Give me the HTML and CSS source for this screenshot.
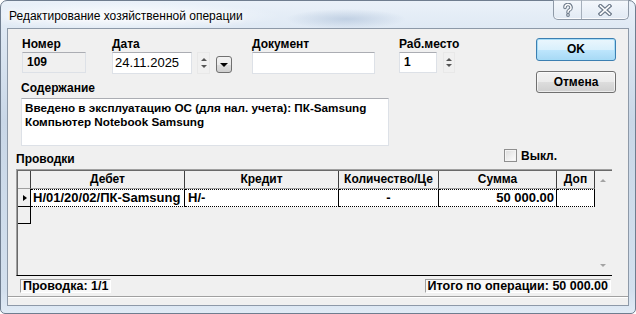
FILE: index.html
```html
<!DOCTYPE html>
<html lang="ru">

<head>
    <meta charset="UTF-8">
    <meta name="viewport" content="width=device-width, initial-scale=1.0">
    <title>Редактирование хозяйственной операции</title>
    <link rel="stylesheet" href="styles.css">
</head>

<body>
    <div class="window">
        <div class="titlebar">
            <div class="title">Редактирование хозяйственной операции</div>
            <div class="caption-buttons">
                <a class="cap-btn cap-help" href="javascript:;">
                    <svg width="12" height="14" viewBox="0 0 12 14">
                        <path d="M3 4.5 A3 3 0 1 1 7.2 7.2 Q6 7.9 6 9.2" fill="none" stroke="#6e7b8b" stroke-width="3.6" stroke-linecap="round" />
                        <circle cx="6" cy="12" r="1.9" fill="#6e7b8b" />
                        <path d="M3 4.5 A3 3 0 1 1 7.2 7.2 Q6 7.9 6 9.2" fill="none" stroke="#fff" stroke-width="1.4" stroke-linecap="round" />
                        <circle cx="6" cy="12" r="0.8" fill="#fff" />
                    </svg>
                </a>
                <a class="cap-btn cap-close" href="javascript:;">
                    <svg width="14" height="12" viewBox="0 0 14 12">
                        <path d="M2.5 2 L11.5 10 M11.5 2 L2.5 10" fill="none" stroke="#6e7b8b" stroke-width="4" stroke-linecap="square" />
                        <path d="M2.5 2 L11.5 10 M11.5 2 L2.5 10" fill="none" stroke="#fff" stroke-width="1.6" stroke-linecap="square" />
                    </svg>
                </a>
            </div>
        </div>
        <div class="frame-body">
            <div class="client">
                <div class="panel">
                    <div class="top">
                        <div class="top-left">
                            <div class="fields">
                                <div class="field field-num">
                                    <label>Номер</label>
                                    <div class="edit edit-readonly">109</div>
                                </div>
                                <div class="field field-date">
                                    <label>Дата</label>
                                    <div class="field-line">
                                        <div class="edit edit-date">24.11.2025</div>
                                        <div class="spin"><span class="arr-up"></span><span class="arr-down"></span></div>
                                        <div class="drop-btn"><span class="arr-drop"></span></div>
                                    </div>
                                </div>
                                <div class="field field-doc">
                                    <label>Документ</label>
                                    <div class="edit edit-doc"></div>
                                </div>
                                <div class="field field-place">
                                    <label>Раб.место</label>
                                    <div class="field-line">
                                        <div class="edit edit-place">1</div>
                                        <div class="spin spin-small"><span class="arr-up"></span><span class="arr-down"></span></div>
                                    </div>
                                </div>
                            </div>
                            <label class="memo-label">Содержание</label>
                            <div class="memo">Введено в эксплуатацию ОС (для нал. учета): ПК-Samsung<br>Компьютер Notebook Samsung</div>
                        </div>
                        <div class="buttons">
                            <a class="btn btn-default" href="javascript:;">OK</a>
                            <a class="btn" href="javascript:;">Отмена</a>
                        </div>
                    </div>

                    <div class="section-head">
                        <div class="section-title">Проводки</div>
                        <label class="switch"><span class="check"></span>Выкл.</label>
                    </div>

                    <div class="grid">
                        <div class="grid-inner">
                            <div class="grid-table">
                                <div class="grid-row grid-header">
                                    <div class="cell ind"></div>
                                    <div class="cell c-debit">Дебет</div>
                                    <div class="cell c-credit">Кредит</div>
                                    <div class="cell c-qty">Количество/Це</div>
                                    <div class="cell c-sum">Сумма</div>
                                    <div class="cell c-extra">Доп</div>
                                </div>
                                <div class="grid-row grid-data">
                                    <div class="cell ind"><span class="row-mark"></span></div>
                                    <div class="cell c-debit">Н/01/20/02/ПК-Samsung</div>
                                    <div class="cell c-credit">Н/-</div>
                                    <div class="cell c-qty">-</div>
                                    <div class="cell c-sum">50 000.00</div>
                                    <div class="cell c-extra"></div>
                                </div>
                                <div class="grid-row grid-new">
                                    <div class="cell ind"></div>
                                </div>
                            </div>
                            <div class="scrollbar">
                                <span class="sb-up"></span>
                                <span class="sb-down"></span>
                            </div>
                        </div>
                    </div>

                    <div class="status">
                        <div class="status-box">Проводка: 1/1</div>
                        <div class="status-box status-total">Итого по операции: 50 000.00</div>
                    </div>
                </div>
            </div>
        </div>
    </div>
</body>

</html>
```

FILE: styles.css
```css
html,
body {
    margin: 0px;
    padding: 0px;
}

body {
    width: 636px;
    height: 314px;
    overflow: hidden;
    font-family: "Liberation Sans", Arial, sans-serif;
    font-size: 12px;
    color: #000000;
    background: #ffffff;
}

a {
    text-decoration: none;
    color: #000000;
}

label {
    display: block;
}

/* оконная рамка */
.window {
    box-sizing: border-box;
    width: 636px;
    height: 314px;
    display: flex;
    flex-direction: column;
    border: #6f7d8f solid 1px;
    border-radius: 7px 7px 5px 5px;
    background:
        radial-gradient(ellipse 160px 14px at 120px 15px, rgba(255, 255, 255, .95), rgba(255, 255, 255, 0)),
        radial-gradient(ellipse 60px 10px at 345px 18px, rgba(170, 190, 215, .6), rgba(255, 255, 255, 0)),
        linear-gradient(180deg, #eaf1f9 0px, #dfe9f4 28px, #c9d7e7 120px, #d3e0ee 290px, #e2ecf6 314px);
}

.titlebar {
    height: 28px;
    display: flex;
    align-items: flex-start;
}

.title {
    margin: 8px 0px 0px 8px;
    line-height: 14px;
    font-size: 12px;
    text-shadow: 0px 0px 6px #ffffff, 0px 0px 10px #ffffff;
}

.caption-buttons {
    margin: -1px 6px 0px auto;
    display: flex;
    height: 19px;
    border: #8e99a7 solid 1px;
    border-top: none;
    border-radius: 0px 0px 5px 5px;
    background: linear-gradient(180deg, rgba(255, 255, 255, .5), rgba(225, 233, 243, .6));
    box-shadow: inset 0px -1px 0px rgba(255, 255, 255, .8);
}

.cap-btn {
    height: 19px;
    display: flex;
    align-items: center;
    justify-content: center;
}

.cap-help {
    width: 27px;
    border-right: #a5afbb solid 1px;
}

.cap-close {
    width: 46px;
}

.frame-body {
    flex: 1;
    display: flex;
    padding: 0px 6px 7px 6px;
}

.client {
    flex: 1;
    display: flex;
    flex-direction: column;
    background: #f0f0f0;
    border: #8d99a8 solid 1px;
}

/* основная панель */
.panel {
    flex: 1;
    display: flex;
    flex-direction: column;
    margin-bottom: 8px;
    border-bottom: #a0a0a0 solid 1px;
    box-shadow: 0px 1px 0px #ffffff;
}

.top {
    display: flex;
    padding-top: 8px;
}

.top-left {
    padding-left: 14px;
}

.fields {
    display: flex;
    align-items: flex-start;
}

.field label,
.memo-label,
.section-title {
    height: 14px;
    line-height: 14px;
    font-weight: bold;
}

.field label {
    margin-bottom: 1px;
}

.field-date {
    margin-left: 26px;
}

.field-doc {
    margin-left: 20px;
}

.field-place {
    margin-left: 24px;
}

.field-line {
    display: flex;
    align-items: flex-start;
}

.edit {
    box-sizing: border-box;
    height: 22px;
    line-height: 20px;
    padding-left: 4px;
    background: #ffffff;
    border: #dde1e7 solid 1px;
    border-top-color: #abadb3;
    font-weight: bold;
}

.edit-readonly {
    width: 64px;
    height: 21px;
    line-height: 19px;
    background: #f0f0f0;
}

.edit-date {
    width: 80px;
    padding-left: 2px;
    font-weight: normal;
    font-size: 13px;
}

.edit-doc {
    width: 123px;
}

.edit-place {
    width: 38px;
    height: 21px;
    line-height: 19px;
}

.spin {
    box-sizing: border-box;
    width: 13px;
    height: 22px;
    margin-left: 5px;
    display: flex;
    flex-direction: column;
    align-items: center;
    justify-content: space-between;
    padding: 5px 0px 5px 0px;
    border: #e8e8e8 solid 1px;
}

.spin-small {
    width: 12px;
    height: 21px;
    margin-left: 6px;
}

.arr-up,
.arr-down {
    width: 0px;
    height: 0px;
    border-left: 3px solid transparent;
    border-right: 3px solid transparent;
}

.arr-up {
    border-bottom: 3px solid #555555;
}

.arr-down {
    border-top: 3px solid #555555;
}

.drop-btn {
    box-sizing: border-box;
    width: 16px;
    height: 17px;
    margin: 4px 0px 0px 6px;
    display: flex;
    align-items: center;
    justify-content: center;
    border: #707070 solid 1px;
    border-radius: 3px;
    background: linear-gradient(180deg, #f2f2f2 0%, #ebebeb 50%, #dddddd 51%, #cfcfcf 100%);
}

.arr-drop {
    width: 0px;
    height: 0px;
    margin-top: 1px;
    border-left: 4px solid transparent;
    border-right: 4px solid transparent;
    border-top: 4px solid #000000;
}

.memo-label {
    margin: 7px 0px 0px -1px;
}

.memo {
    box-sizing: border-box;
    width: 368px;
    height: 48px;
    margin: 3px 0px 0px -1px;
    padding: 2px 0px 0px 3px;
    line-height: 14px;
    font-size: 11.7px;
    background: #ffffff;
    border: #dde1e7 solid 1px;
    border-top-color: #abadb3;
    font-weight: bold;
}

.buttons {
    margin: 1px 12px 0px auto;
    display: flex;
    flex-direction: column;
    gap: 10px;
}

.btn {
    box-sizing: border-box;
    width: 80px;
    height: 22px;
    line-height: 20px;
    text-align: center;
    font-weight: bold;
    border: #707070 solid 1px;
    border-radius: 3px;
    background: linear-gradient(180deg, #f2f2f2 0%, #ebebeb 50%, #dddddd 51%, #cfcfcf 100%);
    box-shadow: inset 0px 0px 0px 1px rgba(255, 255, 255, .6);
}

.btn-default {
    height: 23px;
    line-height: 21px;
    border-color: #3c7fb1;
    background: linear-gradient(180deg, #eaf6fd 0%, #d9f0fc 50%, #bee6fd 51%, #a7d9f5 100%);
    box-shadow: inset 0px 0px 0px 1px #a6dcf7;
}

/* проводки */
.section-head {
    display: flex;
    height: 17px;
    margin-top: 3px;
    padding-left: 8px;
}

.section-title {
    align-self: flex-end;
}

.switch {
    display: flex;
    align-items: center;
    height: 13px;
    margin: 0px 71px 0px auto;
    font-weight: bold;
}

.check {
    box-sizing: border-box;
    width: 13px;
    height: 13px;
    margin-right: 4px;
    border: #8f8f8f solid 1px;
    background: linear-gradient(135deg, #dcdcdc, #ffffff);
    box-shadow: inset 0px 0px 0px 1px #f4f4f4;
}

.grid {
    margin: 3px 16px 0px 8px;
    border-top: #a0a0a0 solid 1px;
    border-left: #a0a0a0 solid 1px;
    border-bottom: #000000 solid 1px;
}

.grid-inner {
    display: flex;
    height: 104px;
    border-top: #696969 solid 1px;
    border-left: #696969 solid 1px;
    background: #f0f0f0;
}

.grid-table {
    width: 577px;
}

.grid-row {
    display: flex;
    font-weight: bold;
}

.cell {
    box-sizing: border-box;
    flex: none;
    overflow: hidden;
    white-space: nowrap;
    border-right: #000000 solid 1px;
}

.ind {
    width: 13px;
}

.c-debit {
    width: 154px;
}

.c-credit {
    width: 154px;
}

.c-qty {
    width: 100px;
}

.c-sum {
    width: 118px;
}

.c-extra {
    width: 38px;
}

.grid-header .cell {
    height: 18px;
    line-height: 16px;
    text-align: center;
    background: #f0f0f0;
    border-right-color: #404040;
    border-bottom: #a0a0a0 solid 1px;
}

.grid-data .cell {
    height: 18px;
    line-height: 16px;
    padding: 0px 2px 0px 2px;
    font-size: 13px;
    background: #ffffff;
    border-top: #000000 dotted 1px;
    border-bottom: #000000 dotted 1px;
}

.grid-data .ind {
    display: flex;
    align-items: center;
    padding: 0px 0px 0px 5px;
    background: #f0f0f0;
    border-top: none;
    border-bottom: #000000 solid 1px;
}

.row-mark {
    width: 0px;
    height: 0px;
    border-top: 3px solid transparent;
    border-bottom: 3px solid transparent;
    border-left: 4px solid #000000;
}

.grid-data .c-credit {
    padding-left: 3px;
}

.grid-data .c-qty {
    text-align: center;
}

.grid-data .c-sum {
    text-align: right;
}

.grid-new .ind {
    height: 17px;
    border-bottom: #000000 solid 1px;
}

.scrollbar {
    width: 16px;
    display: flex;
    flex-direction: column;
    align-items: center;
    justify-content: space-between;
    padding: 8px 0px 8px 0px;
    box-sizing: border-box;
    background: #f0f0f0;
}

.sb-up,
.sb-down {
    width: 0px;
    height: 0px;
    border-left: 3px solid transparent;
    border-right: 3px solid transparent;
}

.sb-up {
    border-bottom: 3px solid #a3a3a3;
}

.sb-down {
    border-top: 3px solid #a3a3a3;
}

.status {
    display: flex;
    height: 20px;
    padding: 3px 17px 0px 12px;
    box-sizing: border-box;
}

.status-box {
    box-sizing: border-box;
    height: 14px;
    line-height: 12px;
    padding: 0px 2px 0px 2px;
    font-size: 12.5px;
    font-weight: bold;
    background: #f8f8f8;
    border: #a0a0a0 solid 1px;
    border-right-color: #ffffff;
    border-bottom-color: #ffffff;
}

.status-total {
    margin-left: auto;
}
```
